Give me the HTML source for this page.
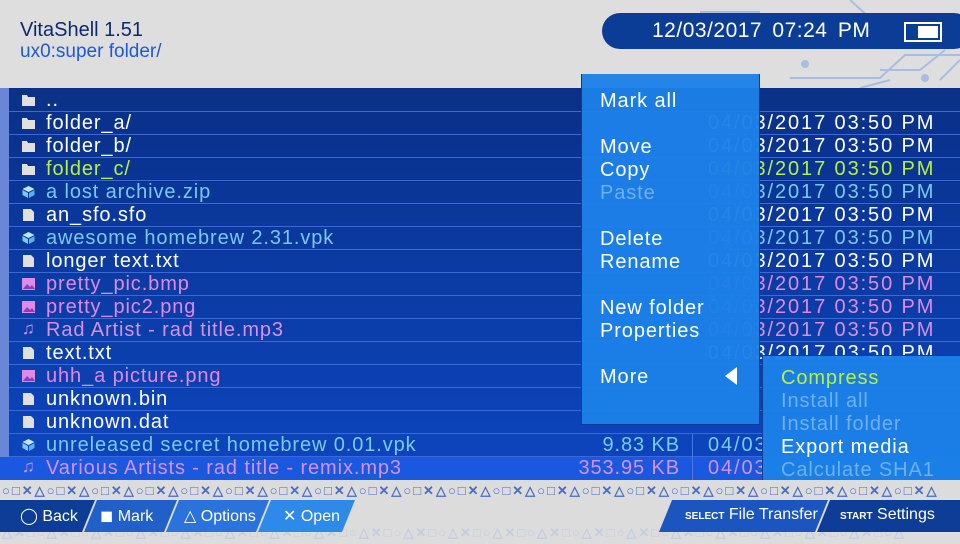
<!DOCTYPE html><html><head><style>
*{margin:0;padding:0;box-sizing:border-box}
body{width:960px;height:544px;overflow:hidden;position:relative;background:#dcdcdc;font-family:"Liberation Sans",sans-serif;}
.hd{position:absolute;left:0;top:0;width:960px;height:88px;background:#dedede}
.t1{position:absolute;left:20px;top:19px;font-size:20px;color:#0d2a6e}
.t2{position:absolute;left:20px;top:41px;font-size:19px;color:#1c5ad8}
.clock{position:absolute;left:602px;top:13px;width:370px;height:36px;border-radius:18px;background:#0b3d96;color:#fff;font-size:21px;padding:6px 0 0 50px;word-spacing:4px;letter-spacing:0.5px}
.bat{position:absolute;left:904px;top:22px;width:38px;height:20px;border:2px solid #fff;background:#0b3d96}
.bat:after{content:"";position:absolute;right:2px;top:2px;width:20px;height:12px;background:#fff}
.list{position:absolute;left:0;top:88px;width:960px;height:392px;background:linear-gradient(#093088,#0d46c0)}
.stripe{position:absolute;left:0;top:88px;width:9px;height:369px;background:#6a86d6}
.row{position:absolute;left:9px;width:951px;height:23px;border-bottom:1px solid #3a6ad8;font-size:20px;letter-spacing:0.9px;color:#fff;white-space:nowrap}
.row .n{position:absolute;left:37px;top:0px}
.row .s{position:absolute;right:280px;top:0px}
.row .d{position:absolute;left:699px;top:0px;letter-spacing:1.9px}
.row .dv{position:absolute;left:683px;top:0;width:1px;height:23px;background:#4a78e0}
.ic{position:absolute;left:13px;top:5px;width:13px;height:12px}
.menu{position:absolute;left:581px;top:74px;width:179px;height:351px;background:rgba(28,128,232,0.96);border:1px solid #0b3d96;border-top:none}
.menu div,.sub div{position:absolute;left:18px;font-size:20px;letter-spacing:0.9px;color:#fff}
.sub{position:absolute;left:762px;top:355px;width:200px;height:137px;background:rgba(28,128,232,0.97);border:1px solid #0b3d96}
.dim{color:#6fb0f0!important}
.foot{position:absolute;left:0;top:480px;width:960px;height:64px;background:#dcdcdc;overflow:hidden}
.sym{position:absolute;left:2px;font-size:13px;font-weight:bold;letter-spacing:2px;color:#4a6cc0;white-space:nowrap}
.bar{position:absolute;top:20px;height:32px;color:#fff;font-size:16px;padding-top:6px}
</style></head><body>
<div class="hd">
<svg width="960" height="88" style="position:absolute;left:0;top:0" stroke="#a8bde0" stroke-width="2" fill="none">
<path d="M850 0 L870 18 L930 18"/><path d="M700 12 L760 12"/><path d="M790 78 L880 78 L905 55 L960 55"/><path d="M880 70 L920 70 L945 50"/><path d="M860 88 L890 80"/><path d="M940 80 L960 60"/>
<circle cx="940" cy="18" r="3" fill="#a8bde0"/><circle cx="805" cy="64" r="3" fill="#a8bde0"/><circle cx="925" cy="78" r="3" fill="#a8bde0"/></svg>
<div class="t1">VitaShell 1.51</div><div class="t2">ux0:super folder/</div>
<div class="clock">12/03/2017 07:24 PM</div><div class="bat"></div>
</div>
<div class="list"></div><div class="stripe"></div>
<div class="row" style="top:89px;background:#0a3388"><svg class="ic"><path d="M0 1h5l1 2h7v9H0z" fill="#e0e0e0"/></svg><span class="n">..</span></div>
<div class="row" style="top:112px"><svg class="ic"><path d="M0 1h5l1 2h7v9H0z" fill="#e0e0e0"/></svg><span class="n">folder_a/</span><span class="d">04/03/2017 03:50 PM</span></div>
<div class="row" style="top:135px"><svg class="ic"><path d="M0 1h5l1 2h7v9H0z" fill="#e0e0e0"/></svg><span class="n">folder_b/</span><span class="d">04/03/2017 03:50 PM</span></div>
<div class="row" style="top:158px;color:#b8f040"><svg class="ic"><path d="M0 1h5l1 2h7v9H0z" fill="#e0e0e0"/></svg><span class="n">folder_c/</span><span class="d">04/03/2017 03:50 PM</span></div>
<div class="row" style="top:181px;color:#7cc8f4"><svg class="ic" viewBox="0 0 12 12"><path d="M6 0L12 3L6 6L0 3z" fill="#bfe6fb"/><path d="M0 4L5.5 7V12L0 9z" fill="#7cc8f4"/><path d="M12 4L6.5 7V12L12 9z" fill="#5ab0e8"/></svg><span class="n">a lost archive.zip</span><span class="d">04/03/2017 03:50 PM</span></div>
<div class="row" style="top:204px"><svg class="ic"><path d="M1 0h8l3 3v9H1z" fill="#e0e0e0"/></svg><span class="n">an_sfo.sfo</span><span class="d">04/03/2017 03:50 PM</span></div>
<div class="row" style="top:227px;color:#7cc8f4"><svg class="ic" viewBox="0 0 12 12"><path d="M6 0L12 3L6 6L0 3z" fill="#bfe6fb"/><path d="M0 4L5.5 7V12L0 9z" fill="#7cc8f4"/><path d="M12 4L6.5 7V12L12 9z" fill="#5ab0e8"/></svg><span class="n">awesome homebrew 2.31.vpk</span><span class="d">04/03/2017 03:50 PM</span></div>
<div class="row" style="top:250px"><svg class="ic"><path d="M1 0h8l3 3v9H1z" fill="#e0e0e0"/></svg><span class="n">longer text.txt</span><span class="d">04/03/2017 03:50 PM</span></div>
<div class="row" style="top:273px;color:#e08ae8"><svg class="ic"><rect width="13" height="12" fill="#e08ae8"/><path d="M1 11l4-5 3 3 2-2 3 4z" fill="#8a3cc0"/></svg><span class="n">pretty_pic.bmp</span><span class="d">04/03/2017 03:50 PM</span></div>
<div class="row" style="top:296px;color:#e08ae8"><svg class="ic"><rect width="13" height="12" fill="#e08ae8"/><path d="M1 11l4-5 3 3 2-2 3 4z" fill="#8a3cc0"/></svg><span class="n">pretty_pic2.png</span><span class="d">04/03/2017 03:50 PM</span></div>
<div class="row" style="top:319px;color:#d890e8"><span class="ic" style="top:0;font-size:17px">♫</span><span class="n">Rad Artist - rad title.mp3</span><span class="s">1</span><span class="d">04/03/2017 03:50 PM</span></div>
<div class="row" style="top:342px"><svg class="ic"><path d="M1 0h8l3 3v9H1z" fill="#e0e0e0"/></svg><span class="n">text.txt</span><span class="d">04/03/2017 03:50 PM</span></div>
<div class="row" style="top:365px;color:#e08ae8"><svg class="ic"><rect width="13" height="12" fill="#e08ae8"/><path d="M1 11l4-5 3 3 2-2 3 4z" fill="#8a3cc0"/></svg><span class="n">uhh_a picture.png</span></div>
<div class="row" style="top:388px"><svg class="ic"><path d="M1 0h8l3 3v9H1z" fill="#e0e0e0"/></svg><span class="n">unknown.bin</span></div>
<div class="row" style="top:411px"><svg class="ic"><path d="M1 0h8l3 3v9H1z" fill="#e0e0e0"/></svg><span class="n">unknown.dat</span></div>
<div class="row" style="top:434px;color:#7cc8f4"><svg class="ic" viewBox="0 0 12 12"><path d="M6 0L12 3L6 6L0 3z" fill="#bfe6fb"/><path d="M0 4L5.5 7V12L0 9z" fill="#7cc8f4"/><path d="M12 4L6.5 7V12L12 9z" fill="#5ab0e8"/></svg><span class="n">unreleased secret homebrew 0.01.vpk</span><span class="dv"></span><span class="s">9.83 KB</span><span class="d">04/03</span></div>
<div class="row" style="top:457px;left:0;width:960px;background:#1a58e0;color:#d890e8;border:none"><span class="ic" style="left:22px;top:0;font-size:17px">♫</span><span class="n" style="left:46px">Various Artists - rad title - remix.mp3</span><span class="dv" style="left:692px"></span><span class="s" style="right:280px">353.95 KB</span><span class="d" style="left:708px">04/03</span></div>
<div class="menu">
<div style="top:16px">Mark all</div>
<div style="top:62px">Move</div><div style="top:85px">Copy</div><div class="dim" style="top:108px">Paste</div>
<div style="top:154px">Delete</div><div style="top:177px">Rename</div>
<div style="top:223px">New folder</div><div style="top:246px">Properties</div>
<div style="top:292px">More</div>
<svg style="position:absolute;left:143px;top:293px" width="12" height="18"><path d="M12 0V18L0 9z" fill="#fff"/></svg>
</div>
<div class="sub">
<div style="top:11px;color:#b8f040">Compress</div><div class="dim" style="top:34px">Install all</div><div class="dim" style="top:57px">Install folder</div><div style="top:80px">Export media</div><div class="dim" style="top:103px">Calculate SHA1</div>
</div>
<div class="foot">
<div class="sym" style="top:3px">○□✕△○□✕△○□✕△○□✕△○□✕△○□✕△○□✕△○□✕△○□✕△○□✕△○□✕△○□✕△○□✕△○□✕△○□✕△○□✕△○□✕△○□✕△○□✕△○□✕△○□✕△</div>
<div class="sym" style="top:45px;color:#c4cce0">△✕□○△✕□○△✕□○△✕□○△✕□○△✕□○△✕□○△✕□○△✕□○△✕□○△✕□○△✕□○△✕□○△✕□○△✕□○△✕□○△✕□○△✕□○△✕□○△✕□○△</div>
<svg width="960" height="32" style="position:absolute;left:0;top:20px">
<path d="M0 0H95L82 32H0z" fill="#0d3d96"/>
<path d="M97 0H177L164 32H84z" fill="#2060c8"/>
<path d="M179 0H269L256 32H166z" fill="#2a72dc"/>
<path d="M271 0H355L342 32H258z" fill="#2e8ae8"/>
<path d="M672 0H828L815 32H659z" fill="#1a55c0"/>
<path d="M830 0H960V32H817z" fill="#0d3d96"/>
</svg>
<div class="bar" style="left:20px">◯ Back</div>
<div class="bar" style="left:100px">◼ Mark</div>
<div class="bar" style="left:184px">△ Options</div>
<div class="bar" style="left:283px">✕ Open</div>
<div class="bar" style="left:685px"><span style="font-size:10px;font-weight:bold">SELECT</span> File Transfer</div>
<div class="bar" style="left:840px"><span style="font-size:10px;font-weight:bold">START</span> Settings</div>
</div>
</body></html>
